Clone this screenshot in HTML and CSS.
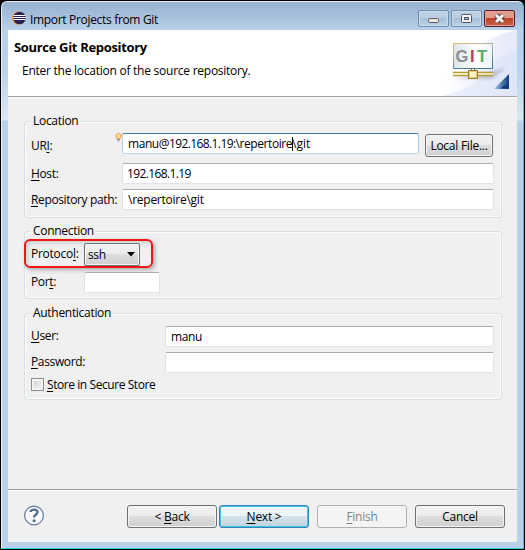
FILE: index.html
```
<!DOCTYPE html>
<html lang="en">
<head>
<meta charset="utf-8">
<title>Import Projects from Git</title>
<link rel="stylesheet" href="styles.css">
</head>
<body>
<div class="window">
  <div class="titlebar">
    <svg class="logo" width="14" height="14" viewBox="0 0 14 14"><circle cx="6.4" cy="7" r="6.4" fill="#f7941e"/><circle cx="7.5" cy="7" r="6.3" fill="#2c2255"/><path d="M1.500 4.500h12M1.200 6.500h12.600M1.500 8.500h12" stroke="#fff" stroke-width="1"/></svg>
    <span class="title">Import Projects from Git</span>
    <div class="controls">
      <span class="ctl"><svg width="31" height="17"><rect x="10.5" y="8.5" width="10" height="4" rx="1" fill="#e6e6de" stroke="#625f62"/></svg></span>
      <span class="ctl"><svg width="31" height="17"><rect x="10.5" y="4.5" width="10" height="8" rx="1" fill="#f4f4f4" stroke="#4e5568"/><rect x="13.5" y="7.5" width="4" height="2" fill="#a9c2df" stroke="#4e5568"/></svg></span>
      <span class="ctl close"><svg width="31" height="17"><path d="M12 5l7 7M19 5l-7 7" stroke="#60424c" stroke-width="5"/><path d="M12 5l7 7M19 5l-7 7" stroke="#f3f3f3" stroke-width="3"/></svg></span>
    </div>
  </div>
  <div class="dialog">
    <div class="header">
      <div class="heading">
        <h1>Source Git Repository</h1>
        <p>Enter the location of the source repository.</p>
      </div>
      <svg class="banner" width="75" height="66" viewBox="442 30 75 66">
        <defs>
          <linearGradient id="sky" x1="0" x2="1"><stop offset="0" stop-color="#fff"/><stop offset=".4" stop-color="#f4f6fd"/><stop offset="1" stop-color="#e4e9f9"/></linearGradient>
          <linearGradient id="frame" x1="0" x2=".4" y1="0" y2="1"><stop offset="0" stop-color="#e7bc7d"/><stop offset=".5" stop-color="#9eb1ae"/><stop offset="1" stop-color="#477b91"/></linearGradient>
          <linearGradient id="board" x1="0" x2="1"><stop offset="0" stop-color="#dce6eb"/><stop offset=".6" stop-color="#fff"/><stop offset="1" stop-color="#edf3f8"/></linearGradient>
          <linearGradient id="tri" x1="0" x2="1"><stop offset="0" stop-color="#9fc8e8"/><stop offset=".55" stop-color="#4e79ae"/><stop offset="1" stop-color="#173b7b"/></linearGradient>
          <filter id="soft"><feGaussianBlur stdDeviation="1.5"/></filter>
        </defs>
        <path d="M442 96Q450 60 485 42Q500 33 517 30V96Z" fill="url(#sky)"/>
        <path d="M442 96Q480 88 496 60Q505 52 517 51V96Z" fill="#d8e0f6" opacity=".45"/>
        <path d="M455 79L506 68L492 79Z" fill="#8d819b" opacity=".4" filter="url(#soft)"/>
        <rect x="453.500" y="43.500" width="39" height="25" fill="url(#board)" stroke="url(#frame)"/>
        <text y="62" class="git"><tspan x="455.500" fill="#8c8c8c">G</tspan><tspan x="470" fill="#bd3d47">I</tspan><tspan x="477" fill="#57a967">T</tspan></text>
        <path d="M453 72.500h40M453 75.500h40" stroke="#b0a035" stroke-width="1.300"/><path d="M453 74h40" stroke="#f4edb4" stroke-width="1.500"/>
        <path d="M471.500 68v3M474.500 68v3" stroke="#826f36"/>
        <rect x="468.500" y="70.500" width="9" height="8" fill="#fff4c8" stroke="#9c7836"/><rect x="469.500" y="71.500" width="7" height="6" fill="none" stroke="#e8ca83"/>
        <path d="M509 74v15h-15Z" fill="url(#tri)"/><path d="M508.500 83v5.500h-9Z" fill="#173b7b"/>
      </svg>
    </div>

    <div class="content">
      <section class="group location">
        <h2>Location</h2>
        <div class="row uri">
          <label>UR<u>I</u>:</label>
          <svg class="bulb" width="7" height="9" viewBox="0 0 7 9"><path d="M3.500.6C5.200.6 6.200 1.500 6.200 2.900C6.200 4.200 5 4.600 4.800 6H2.200C2 4.600.8 4.200.8 2.900C.8 1.500 1.800.6 3.500.6Z" fill="#ffe0a0" stroke="#e99024"/><path d="M2.300 6.500h2.400M2.700 8h1.600" stroke="#718697"/></svg>
          <div class="field focus">manu@<span class="digits">192.168.1.19</span>:\repertoire<i class="caret"></i><span class="tail">\git</span></div>
          <div class="button local"><span>Local File...</span></div>
        </div>
        <div class="row"><label><u>H</u>ost:</label><div class="field digits">192.168.1.19</div></div>
        <div class="row"><label><u>R</u>epository path:</label><div class="field path">\repertoire\git</div></div>
      </section>

      <section class="group connection">
        <h2>Connection</h2>
        <div class="protocol">
          <label>Protoco<u>l</u>:</label>
          <div class="combo"><span>ssh</span><svg width="8" height="5"><path d="M0 0h8L4 4.500Z" fill="#000"/></svg></div>
        </div>
        <div class="row port"><label>Por<u>t</u>:</label><div class="field"></div></div>
      </section>

      <section class="group auth">
        <h2>Authentication</h2>
        <div class="row"><label><u>U</u>ser:</label><div class="field">manu</div></div>
        <div class="row"><label><u>P</u>assword:</label><div class="field"></div></div>
        <div class="check"><i class="box"></i><span><u>S</u>tore in Secure Store</span></div>
      </section>
    </div>

    <div class="footer">
      <svg class="help" width="22" height="22" viewBox="0 0 22 22"><circle cx="11" cy="10.500" r="9.400" fill="#f7f9fc" stroke="#63779a" stroke-width="1.200"/><path d="M7.600 7C7.800 3.800 14.500 3.600 14.500 7.100C14.500 9.600 11.100 9.400 11.100 12.500" fill="none" stroke="#506b92" stroke-width="2.300"/><circle cx="11.100" cy="15.800" r="1.500" fill="#506b92"/></svg>
      <div class="button"><span>&lt; <u>B</u>ack</span></div>
      <div class="button default"><span><u>N</u>ext &gt;</span></div>
      <div class="button disabled"><span><u>F</u>inish</span></div>
      <div class="button"><span>Cancel</span></div>
    </div>
  </div>
</div>
</body>
</html>
```
FILE: styles.css
```
* { box-sizing: border-box; }
body {
  margin: 0;
  width: 525px;
  height: 550px;
  overflow: hidden;
  background: #000;
  color: #000;
  font: 12px/16px "Open Sans", "Noto Sans", sans-serif;
  letter-spacing: -0.36px;
}
h1, h2, p { margin: 0; font-weight: normal; }
u { text-decoration: underline; text-decoration-thickness: 1px; text-underline-offset: 2px; }
svg { display: block; flex: none; }
.window {
  width: 523px;
  height: 548px;
  margin: 1px;
  padding: 0 6px 6px;
  border: 1px solid #e4f1fc;
  border-right-color: #2bcce5;
  border-bottom-color: #2bcce5;
  border-radius: 6px 6px 0 0;
  background: linear-gradient(#98b2d0 0, #a6bfdb 14px, #b9d1ea 28px, #bdd2ea 70px, #dbe7f5 118px, #b9d1ea 119px);
}
.titlebar { display: flex; height: 28px; padding-left: 4px; }
.logo { margin-top: 9px; }
.title { margin: 10px 0 0 4px; white-space: nowrap; letter-spacing: -.32px; }
.controls { display: flex; gap: 2px; margin: 8px 2px 0 auto; }
.ctl {
  width: 31px;
  height: 17px;
  border: 1px solid #718eac;
  border-radius: 2px;
  background: linear-gradient(#bdcfe2 45%, #a7bfd8 50%, #bdd3e8);
  box-shadow: inset 0 0 0 1px #c9dcec;
}
.ctl svg { margin: -1px; }
.close {
  border-color: #591c26;
  background: linear-gradient(#df9d8b 45%, #c04424 50%, #cb6348);
  box-shadow: inset 0 0 0 1px #dfa199;
}
.dialog { width: 509px; height: 512px; background: #f0f0f0; }
.header {
  display: flex;
  justify-content: space-between;
  height: 68px;
  background: #fff;
  border-bottom: 1px solid #fff;
  box-shadow: inset 0 -1px #a0a0a0;
}
.heading { padding: 8px 0 0 6px; white-space: nowrap; }
h1 { font-size: 13px; font-weight: 700; line-height: 18px; letter-spacing: -.33px; }
.heading p { margin: 7px 0 0 8px; letter-spacing: -.25px; }
.git { font: 700 16.5px "Liberation Sans", sans-serif; letter-spacing: 0; }
.content { display: grid; gap: 14px; height: 391px; padding: 23px 15px 0 16px; align-content: start; }
.group { border: 1px solid #d5dfe5; border-radius: 3px; padding: 0 7px 0 6px; box-shadow: inset 0 0 0 1px #fbfbfb; }
.location { height: 97px; }
.connection { height: 68px; margin-top: -1px; padding-left: 0; }
.auth { height: 87px; }
h2 { width: max-content; height: 16px; margin: -9px 0 0; padding: 0 2px; background: #f0f0f0; font-size: 12px; letter-spacing: -.3px; }
.connection h2 { margin-left: 6px; }
.row { display: grid; grid-template-columns: 91px 1fr; height: 21px; margin-bottom: 5px; white-space: nowrap; }
.row label { margin-top: 3px; }
.field {
  height: 21px;
  padding: 2px 5px 0 4px;
  border: 1px solid #e2e3ea;
  border-top-color: #abadb3;
  border-left-color: #dce1e7;
  border-radius: 2px;
  background: #fff;
}
.digits { letter-spacing: -.62px; }
.path { padding-left: 5px; letter-spacing: -.25px; }
.tail { letter-spacing: 0; }
.uri { grid-template-columns: 84px 7px 297px 68px; height: 25px; margin-top: 4px; }
.uri label { margin-top: 5px; }
.focus { padding-left: 5px; border-color: #3d7bad #a4c9e3 #b7d9ed #b5cfe7; letter-spacing: -.43px; }
.auth .field { padding-left: 5px; }
.caret { display: inline-block; width: 1px; height: 14px; margin-right: -1px; background: #000; vertical-align: -3px; }
.button {
  display: flex;
  justify-content: center;
  width: 90px;
  height: 23px;
  padding-top: 3px;
  border: 1px solid #707070;
  border-radius: 3px;
  background: linear-gradient(#f2f2f2 0, #ebebeb 49%, #dddddd 50%, #cfcfcf);
  box-shadow: inset 0 0 0 1px #f5f5f5;
  white-space: nowrap;
  letter-spacing: -.25px;
}
.local { width: 68px; margin: 1px 0 0 6px; }
.protocol {
  display: flex;
  width: 129px;
  height: 29px;
  margin: 0 0 4px -1px;
  padding: 2px 0 0 5px;
  border: 2px solid #ee151b;
  border-radius: 6px;
  box-shadow: 2px 2px 4px #aaa, inset 2px 2px 4px #ccc;
}
.protocol label { width: 53px; margin-top: 3px; letter-spacing: -.25px; }
.combo {
  display: flex;
  align-items: center;
  justify-content: space-between;
  width: 56px;
  height: 23px;
  padding: 0 4px 0 3px;
  border: 1px solid #707070;
  border-radius: 2px;
  background: linear-gradient(#f2f2f2, #ebebeb 49%, #ddd 50%, #cfcfcf);
  box-shadow: inset 0 0 0 1px #f5f5f5;
}
.port { grid-template-columns: 53px 76px; margin-left: 6px; }
.port label { margin-top: 2px; }
.auth .row { grid-template-columns: 134px 1fr; }
.auth .row label { margin-top: 2px; }
.auth h2 { margin-bottom: 5px; }
.check { display: flex; gap: 3px; white-space: nowrap; }
.check span { margin-top: -1px; letter-spacing: -.43px; }
.box { width: 13px; height: 13px; border: 1px solid #8e8f8f; background: linear-gradient(135deg, #cbcfd5, #f6f6f6); box-shadow: inset 0 0 0 2px #f4f4f4; }
.footer {
  display: flex;
  height: 53px;
  padding: 15px 12px 0 15px;
  border-top: 1px solid #a0a0a0;
  box-shadow: inset 0 1px #fff;
}
.help { margin-right: 82px; }
.default { margin-left: 2px; border-color: #3c7fb1; box-shadow: inset 0 0 0 1px #38c8ef; background: linear-gradient(#edf4f7 49%, #d5e3e9 50%, #bed3dd); }
.disabled { margin: 0 8px; border-color: #adb2b5; background: #f4f4f4; color: #838383; }
```
